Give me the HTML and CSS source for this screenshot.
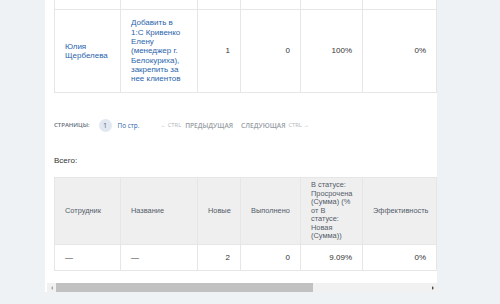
FILE: index.html
```html
<!DOCTYPE html>
<html lang="ru">
<head>
  <meta charset="UTF-8" />
  <title>Отчёт</title>
  <link rel="stylesheet" href="styles.css">
</head>
<body>
  <div class="panel">
    <div class="scroll">
      <div class="content">
        <table class="grid grid-top">
          <colgroup>
            <col class="c1"><col class="c2"><col class="c3"><col class="c4">
            <col class="c5"><col class="c6"><col class="c7"><col class="c8">
          </colgroup>
          <tr class="row-cut">
            <td></td><td></td><td></td><td></td><td></td><td></td><td></td><td></td>
          </tr>
          <tr class="row-main">
            <td><a href="#">Юлия<br>Щербелева</a></td>
            <td><a href="#">Добавить в<br>1:С Кривенко<br>Елену<br>(менеджер г.<br>Белокуриха),<br>закрепить за<br>нее клиентов</a></td>
            <td class="num">1</td>
            <td class="num">0</td>
            <td class="num">100%</td>
            <td class="num">0%</td>
            <td></td>
            <td></td>
          </tr>
        </table>

        <div class="pager">
          <span class="pager-title">Страницы:</span>
          <span class="pager-page">1</span>
          <a class="pager-size" href="#">По стр.</a>
          <span class="pager-nav">
            <span class="pager-key">&larr; Ctrl</span>
            <span class="pager-link">Предыдущая</span>
            <span class="pager-link pager-next">Следующая</span>
            <span class="pager-key">Ctrl &rarr;</span>
          </span>
        </div>

        <div class="total">Всего:</div>

        <table class="grid grid-bottom">
          <colgroup>
            <col class="c1"><col class="c2"><col class="c3"><col class="c4">
            <col class="c5"><col class="c6"><col class="c7"><col class="c8">
          </colgroup>
          <tr class="row-head">
            <th>Сотрудник</th>
            <th>Название</th>
            <th>Новые</th>
            <th>Выполнено</th>
            <th class="th-long">В статусе:<br>Просрочена<br>(Сумма) (%<br>от В<br>статусе:<br>Новая<br>(Сумма))</th>
            <th>Эффективность</th>
            <th></th>
            <th></th>
          </tr>
          <tr class="row-sum">
            <td>&mdash;</td>
            <td>&mdash;</td>
            <td class="num">2</td>
            <td class="num">0</td>
            <td class="num">9.09%</td>
            <td class="num">0%</td>
            <td></td>
            <td></td>
          </tr>
        </table>
      </div>
    </div>
    <div class="scrollbar">
      <span class="sb-arrow sb-left"></span>
      <span class="sb-track"><span class="sb-thumb"></span></span>
      <span class="sb-arrow sb-right"></span>
    </div>
  </div>
</body>
</html>
```

FILE: styles.css
```css
body {
  margin: 0;
  background: #eef2f4;
  font-family: "Liberation Sans", Arial, sans-serif;
  color: #333;
}
.panel {
  margin-left: 45px;
  width: 392px;
  padding-left: 2px;
  box-sizing: border-box;
  background: #fff;
}
.scroll {
  overflow: hidden;
}
.content {
  width: 570px;
  padding-left: 7px;
}
.grid {
  border-collapse: separate;
  border-spacing: 0;
  table-layout: fixed;
  width: 553px;
}
.c1 { width: 67px; }
.c2 { width: 77px; }
.c3 { width: 43px; }
.c4 { width: 60px; }
.c5 { width: 62px; }
.c6 { width: 74px; }
.c7 { width: 85px; }
.c8 { width: 85px; }
.grid td, .grid th {
  box-sizing: border-box;
  border-right: 1px solid #e6e6e6;
  border-bottom: 1px solid #e6e6e6;
  padding: 0 10px;
  font-size: 8px;
  line-height: 9.3px;
  text-align: left;
  vertical-align: middle;
  overflow: hidden;
}
.grid td:first-child, .grid th:first-child {
  border-left: 1px solid #e6e6e6;
}
.grid a {
  color: #2a64ac;
  text-decoration: none;
}
.grid .num {
  text-align: right;
}
.row-cut td {
  height: 10px;
}
.row-main td {
  height: 83px;
}
.grid th {
  border-top: 1px solid #e6e6e6;
  background: #efefef;
  color: #535c69;
  font-weight: normal;
  font-size: 7.4px;
  line-height: 8.5px;
  height: 68px;
}
.grid .th-long {
  padding-right: 0;
}
.row-sum td {
  height: 26px;
}

.pager {
  display: flex;
  align-items: center;
  height: 14px;
  margin-top: 25px;
  font-family: "Open Sans", sans-serif;
}
.pager-title {
  font-size: 6px;
  font-weight: 600;
  text-transform: uppercase;
  color: #646d79;
}
.pager-page {
  width: 13px;
  height: 13px;
  margin-left: 9px;
  border-radius: 50%;
  background: #e1e8f2;
  color: #535c69;
  font-size: 6.5px;
  line-height: 13px;
  text-align: center;
}
.pager-size {
  margin-left: 6px;
  font-size: 6.4px;
  color: #2a64ac;
  text-decoration: none;
}
.pager-nav {
  display: flex;
  align-items: center;
  margin-left: 21px;
  text-transform: uppercase;
}
.pager-key {
  font-size: 5.8px;
  color: #b3b7bc;
}
.pager-link {
  margin-left: 4px;
  font-size: 6.6px;
  font-weight: 600;
  color: #979da4;
}
.pager-next {
  margin-left: 8px;
  margin-right: 3px;
}

.total {
  margin-top: 24px;
  font-size: 8px;
  line-height: 10px;
  color: #333;
}
.grid-bottom {
  margin-top: 11px;
  margin-bottom: 12px;
}

.scrollbar {
  display: flex;
  height: 9px;
  background: #f1f1f1;
}
.sb-arrow {
  width: 9px;
  display: flex;
  align-items: center;
  justify-content: center;
}
.sb-arrow::before {
  content: "";
  border-top: 2px solid transparent;
  border-bottom: 2px solid transparent;
}
.sb-left::before {
  border-right: 2px solid #a3a3a3;
}
.sb-right::before {
  border-left: 2px solid #505050;
}
.sb-track {
  flex: 1;
  display: flex;
}
.sb-thumb {
  width: 257px;
  background: #c1c1c1;
}
```
